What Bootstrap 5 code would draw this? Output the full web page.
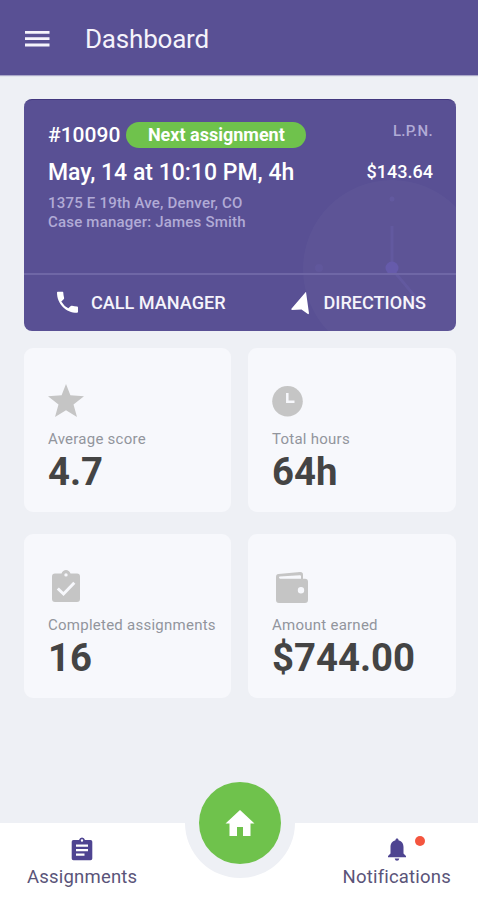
<!DOCTYPE html>
<html lang="en">
<head>
<meta charset="utf-8">
<meta name="viewport" content="width=device-width, initial-scale=1">
<title>Dashboard</title>
<link href="https://cdn.jsdelivr.net/npm/bootstrap@5.3.0/dist/css/bootstrap.min.css" rel="stylesheet">
<style>
:root { --brand: #595094; --leaf: #6fc24c; --page: #eef0f5; }
body { font-family: Roboto, "Liberation Sans", sans-serif; background: var(--page); height: 900px; overflow: hidden; white-space: nowrap; }
svg { display: block; flex: none; }
.app-bar { background: var(--brand); height: 75px; padding: 3px 24px 0; gap: 34px; box-shadow: 0 1px 1px rgba(89,80,148,.45); }
.app-title { font-size: 26px; line-height: 30px; color: #f5f3fb; letter-spacing: -.2px; }
.app-main { padding: 24px 22px 0 24px; }
.shift { background: var(--brand); border-radius: 8px; height: 232px; border-top: 1px solid #42377e; position: relative; overflow: hidden; }
.shift-clock { position: absolute; right: 0; top: 0; }
.shift-info { padding: 22px 23px 0 24px; height: 173px; position: relative; }
.shift-id { font-size: 21px; line-height: 26px; font-weight: 500; }
.shift-tag { background: var(--leaf); border-radius: 13px; width: 180px; height: 26px; line-height: 26px; font-size: 18px; font-weight: 700; margin-left: 6px; }
.shift-when { font-size: 23px; line-height: 26px; font-weight: 500; }
.shift-when-row { margin-top: 12px; }
.shift-pay { font-size: 18px; line-height: 24px; font-weight: 500; }
.shift-soft { font-size: 15px; line-height: 19px; font-weight: 500; letter-spacing: .2px; color: #b1abd6; }
.shift-role { font-size: 15px; line-height: 18px; font-weight: 500; letter-spacing: .3px; color: #b1abd6; }
.shift-actions { border-top: 2px solid #6f67a6; height: 59px; padding: 0 30px 1px 32px; position: relative; }
.shift-action { font-size: 18.1px; font-weight: 500; color: #f5f3fb; gap: 12px; }
.tiles { display: grid; grid-template-columns: 207px 208px; column-gap: 17px; row-gap: 22px; margin-top: 17px; }
.tile { background: #f7f8fc; border-radius: 9px; height: 164px; padding: 35px 0 0 24px; }
.tile-icon { height: 36px; fill: #c5c5c5; }
.tile-label { font-size: 15px; line-height: 18px; color: #92959d; margin-top: 11px; letter-spacing: .25px; }
.tile-value { font-size: 38.3px; line-height: 40px; font-weight: 700; color: #444; margin-top: 4px; }
.tab-bar { height: 77px; background: #fff; padding: 0 27px; }
.tab { font-size: 18.5px; line-height: 22px; color: #5a5479; padding-top: 14px; letter-spacing: .2px; }
.tab svg { fill: #4e4491; }
.tab-dot { position: absolute; width: 10px; height: 10px; border-radius: 50%; background: #f4553f; left: 72px; top: 13px; }
.home-ring { position: absolute; width: 110px; height: 110px; left: 184.5px; top: -55px; background: var(--page); }
.home-btn { width: 82px; height: 82px; background: var(--leaf); }
</style>
</head>
<body class="d-flex flex-column">
<header class="app-bar d-flex align-items-center">
  <svg width="27" height="18" viewBox="0 0 27 18" fill="#f5f3fb"><path d="M1 1h24.500v2.800H1zM1 7.300h24.500v2.800H1zM1 13.600h24.500v2.800H1z"/></svg>
  <h1 class="app-title fw-normal m-0">Dashboard</h1>
</header>
<main class="app-main flex-grow-1">
  <section class="shift text-white">
    <svg class="shift-clock" width="156" height="232" viewBox="300 99 156 232">
      <circle cx="392" cy="268" r="89" fill="#fff" opacity=".028"/>
      <circle cx="392" cy="198" r="2.500" fill="#665da5" opacity=".6"/>
      <circle cx="319" cy="267" r="4" fill="#665da5" opacity=".4"/>
      <path d="M392 225V268L418 299" fill="none" stroke="#675da8" stroke-width="3" opacity=".5"/>
      <circle cx="392" cy="267" r="6.500" fill="#665bab"/>
    </svg>
    <div class="shift-info">
      <div class="d-flex justify-content-between">
        <div class="d-flex"><span class="shift-id">#10090</span><span class="shift-tag text-center">Next assignment</span></div>
        <span class="shift-role">L.P.N.</span>
      </div>
      <div class="shift-when-row d-flex justify-content-between mb-1">
        <span class="shift-when">May, 14 at 10:10 PM, 4h</span><span class="shift-pay">$143.64</span>
      </div>
      <div class="shift-soft pt-1">1375 E 19th Ave, Denver, CO</div>
      <div class="shift-soft">Case manager: James Smith</div>
    </div>
    <div class="shift-actions d-flex justify-content-between align-items-center">
      <div class="shift-action d-flex align-items-center">
        <svg width="23" height="23" viewBox="0 0 23 23" fill="#fff"><path d="M1 1.500C1 1 1.500.8 2 .8H6.300C7 .8 7.300 1.200 7.300 1.800Q7.400 4.600 8.100 6.800Q8.300 7.600 7.700 8.200L5.300 10.400Q8 15 12.300 17.300L14.800 14.900Q15.300 14.500 16 14.700Q18.500 15.500 21 15.500Q22 15.600 22 16.600V20.800Q22 21.800 21 21.800C10 21.800 1 13 1 1.500Z"/></svg>
        <span>CALL MANAGER</span>
      </div>
      <div class="shift-action d-flex align-items-center">
        <svg width="20" height="24" viewBox="0 0 20 24" fill="#fff"><path d="M15 .8L.2 17.900L.8 18.900L10.500 18.400L17.200 23.200L18 22.500Z"/></svg>
        <span>DIRECTIONS</span>
      </div>
    </div>
  </section>
  <section class="tiles">
    <div class="tile">
      <svg class="tile-icon" width="36" height="36" viewBox="0 0 36 36"><path d="M18 1L22.400 12.300L36 13.200L25.500 21.500L29 34L18 27.200L7 34L10.500 21.500L0 13.200L13.600 12.300Z"/></svg>
      <div class="tile-label">Average score</div><div class="tile-value">4.7</div>
    </div>
    <div class="tile">
      <svg class="tile-icon" width="36" height="36" viewBox="0 0 36 36"><circle cx="15.500" cy="18.300" r="15.300"/><path d="M15.300 10V18.800H22.500" fill="none" stroke="#f7f8fc" stroke-width="2.500"/></svg>
      <div class="tile-label">Total hours</div><div class="tile-value">64h</div>
    </div>
    <div class="tile">
      <svg class="tile-icon" width="36" height="36" viewBox="0 0 36 36"><path fill-rule="evenodd" d="M7 4.500H13.500C14.300 2.500 16 1 18 1S21.700 2.500 22.500 4.500H29Q32 4.500 32 7.500V30Q32 33 29 33H7Q4 33 4 30V7.500Q4 4.500 7 4.500ZM18 4.200A1.700 1.700 0 1 0 18 7.600A1.700 1.700 0 1 0 18 4.200Z"/><path d="M9.800 19.500L15.500 25L26.300 13.800" fill="none" stroke="#f7f8fc" stroke-width="3"/></svg>
      <div class="tile-label">Completed assignments</div><div class="tile-value">16</div>
    </div>
    <div class="tile">
      <svg class="tile-icon" width="36" height="36" viewBox="0 0 36 36"><path fill-rule="evenodd" d="M6.500 5L28 3Q31 2.800 31 5.800V9.700H33Q36 9.700 36 12.700V31Q36 34 33 34H7Q4 34 4 31V8Q4 5.200 6.500 5ZM7.500 7.500Q6 8.800 8 9.700H29V7.200Q29 6.200 28 6.200ZM29 18A3.200 3.200 0 1 0 29 24.400A3.200 3.200 0 1 0 29 18Z"/></svg>
      <div class="tile-label">Amount earned</div><div class="tile-value">$744.00</div>
    </div>
  </section>
</main>
<nav class="tab-bar d-flex justify-content-between position-relative">
  <div class="tab d-flex flex-column align-items-center">
    <svg width="22" height="25" viewBox="0 0 22 25"><path fill-rule="evenodd" d="M2.500 3H8Q8.700.5 11 .5T14 3H19.500Q21.300 3 21.300 4.800V21.500Q21.300 23.300 19.500 23.300H2.500Q.7 23.300.7 21.500V4.800Q.7 3 2.500 3ZM11 2.300A1.200 1.200 0 1 0 11 4.700A1.200 1.200 0 1 0 11 2.300ZM5 7.500V9.700H17V7.500ZM5 12V14.200H17V12ZM5 16.500V18.700H13.500V16.500Z"/></svg>
    <span class="mt-1">Assignments</span>
  </div>
  <div class="tab d-flex flex-column align-items-center position-relative">
    <svg width="20" height="25" viewBox="0 0 20 25"><path d="M10 1.500C11 1.500 11.500 2.200 11.500 3.200C15 4 16.500 7 16.500 10V16.500L19 19V20.200H1V19L3.500 16.500V10C3.500 7 5 4 8.500 3.200C8.500 2.200 9 1.500 10 1.500ZM7.700 21.500H12.300Q12 23.800 10 23.800T7.700 21.500Z"/></svg>
    <span class="tab-dot"></span>
    <span class="mt-1">Notifications</span>
  </div>
  <div class="home-ring rounded-circle d-flex align-items-center justify-content-center">
    <div class="home-btn rounded-circle d-flex align-items-center justify-content-center">
      <svg width="30" height="28" viewBox="0 0 30 28" fill="#fff"><path d="M15 1L29.500 14.500H25.500V27H18V18H12V27H4.500V14.500H.5Z"/></svg>
    </div>
  </div>
</nav>
<script src="https://cdn.jsdelivr.net/npm/bootstrap@5.3.0/dist/js/bootstrap.bundle.min.js"></script>
</body>
</html>
